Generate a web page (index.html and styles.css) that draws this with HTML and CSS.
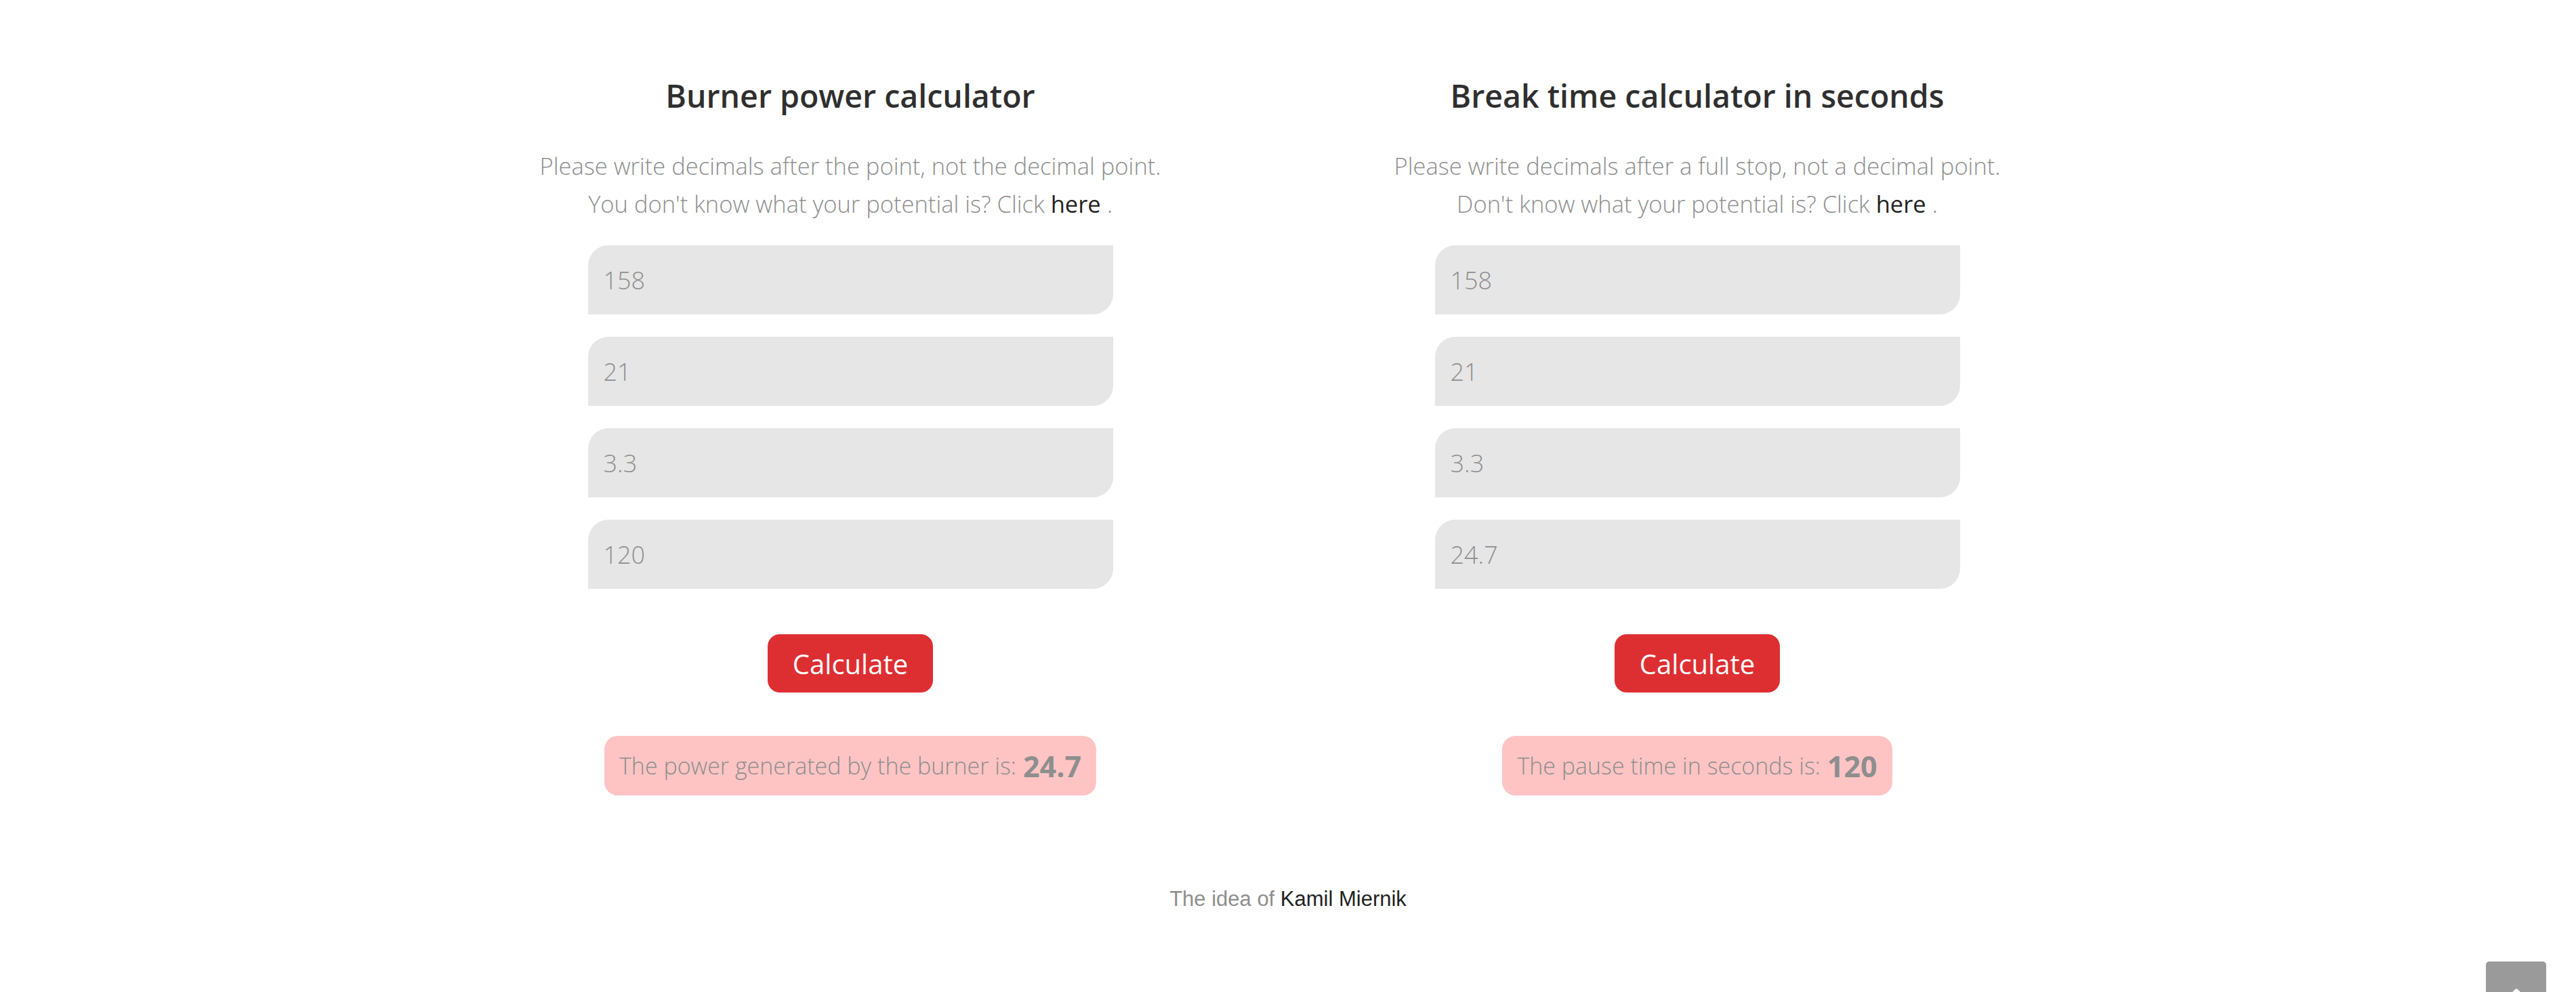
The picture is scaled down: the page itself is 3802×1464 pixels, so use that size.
FILE: index.html
```html
<!DOCTYPE html>
<html lang="en">
<head>
<meta charset="utf-8">
<title>Calculators</title>
<link rel="stylesheet" href="styles.css">
</head>
<body>
<main class="page">
  <section class="calc">
    <h2 class="calc-title">Burner power calculator</h2>
    <p class="calc-desc">Please write decimals after the point, not the decimal point.<br>You don't know what your potential is? Click <a class="link" href="#">here</a> .</p>
    <div class="fields">
      <input class="field" type="text" value="158">
      <input class="field" type="text" value="21">
      <input class="field" type="text" value="3.3">
      <input class="field" type="text" value="120">
    </div>
    <button class="btn" type="button">Calculate</button>
    <div class="result">The power generated by the burner is: <strong class="result-value">24.7</strong></div>
  </section>
  <section class="calc">
    <h2 class="calc-title">Break time calculator in seconds</h2>
    <p class="calc-desc">Please write decimals after a full stop, not a decimal point.<br>Don't know what your potential is? Click <a class="link" href="#">here</a> .</p>
    <div class="fields">
      <input class="field" type="text" value="158">
      <input class="field" type="text" value="21">
      <input class="field" type="text" value="3.3">
      <input class="field" type="text" value="24.7">
    </div>
    <button class="btn" type="button">Calculate</button>
    <div class="result">The pause time in seconds is: <strong class="result-value">120</strong></div>
  </section>
</main>
<footer class="footer">The idea of <span class="author">Kamil Miernik</span></footer>
<a class="to-top" href="#" aria-label="Back to top">
  <svg class="to-top-icon" viewBox="0 0 24 24" width="34" height="34"><path d="M5 16 L12 9 L19 16" fill="none" stroke="#fff" stroke-width="3.5" stroke-linecap="round" stroke-linejoin="round"/></svg>
</a>
</body>
</html>
```
FILE: styles.css
```css
html, body {
  margin: 0;
  padding: 0;
  background: #ffffff;
}
body {
  font-family: "Open Sans", "Noto Sans", sans-serif;
  color: #8e8e8e;
  min-height: 1464px;
  overflow: hidden;
  position: relative;
}
.page {
  display: flex;
  justify-content: center;
  padding-top: 115px;
  padding-right: 42px;
}
.calc {
  width: 1250px;
  display: flex;
  flex-direction: column;
  align-items: center;
  text-align: center;
}
.calc-title {
  margin: 0;
  font-size: 46.5px;
  line-height: 53px;
  font-weight: 600;
  color: #2f2f2f;
}
.calc-desc {
  margin: 49px 0 0;
  font-size: 34.5px;
  line-height: 56px;
  font-weight: 300;
  color: #8e8e8e;
}
.link {
  color: #222222;
  text-decoration: none;
  font-weight: 400;
}
.fields {
  margin-top: 33px;
  display: flex;
  flex-direction: column;
  gap: 33px;
}
.field {
  box-sizing: border-box;
  width: 775px;
  height: 102px;
  border: none;
  outline: none;
  background: #e6e6e6;
  border-radius: 30px 0 30px 0;
  padding: 0 23px;
  font-family: inherit;
  font-size: 36px;
  font-weight: 300;
  color: #8e8e8e;
}
.btn {
  margin-top: 67px;
  box-sizing: border-box;
  width: 244px;
  height: 86px;
  border: none;
  border-radius: 18px;
  background: #dd2f32;
  color: #ffffff;
  font-family: inherit;
  font-size: 40px;
  font-weight: 400;
  padding: 0;
}
.result {
  margin-top: 64px;
  box-sizing: border-box;
  height: 88px;
  display: flex;
  align-items: center;
  gap: 10px;
  padding: 0 22px;
  border-radius: 20px;
  background: #fec4c4;
  font-size: 34px;
  font-weight: 300;
  color: #8e8e8e;
}
.result-value {
  font-size: 43px;
  font-weight: 700;
  color: #8e8e8e;
}
.footer {
  margin-top: 135px;
  text-align: center;
  font-family: "Liberation Sans", Arial, sans-serif;
  font-size: 31px;
  color: #8e8e8e;
}
.author {
  color: #222222;
}
.to-top {
  position: absolute;
  left: 3669px;
  top: 1419px;
  width: 89px;
  height: 89px;
  border-radius: 5px;
  background: #9a9a9a;
  display: flex;
  justify-content: center;
  padding-top: 30px;
  box-sizing: border-box;
}
.to-top-icon {
  display: block;
}
```
